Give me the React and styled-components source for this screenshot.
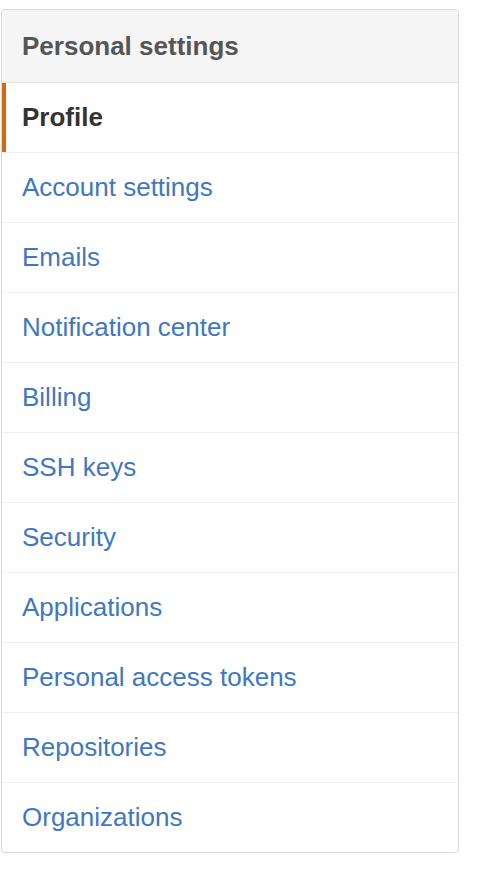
import styled, { createGlobalStyle } from 'styled-components';

const GlobalStyle = createGlobalStyle`
  body {
    margin: 0;
    background: #fff;
    font-family: 'Liberation Sans', Arial, sans-serif;
  }
`;

const Page = styled.div`
  padding: 9px 19px 20px 1px;
`;

const Menu = styled.nav`
  border: 1px solid #d8d8d8;
  border-radius: 4px;
  background: #fff;
  overflow: hidden;
`;

const MenuHeading = styled.h3`
  margin: 0;
  height: 72px;
  display: flex;
  align-items: center;
  padding: 0 20px;
  font-size: 26px;
  font-weight: bold;
  color: #555;
  background: #f5f5f5;
  border-bottom: 1px solid #e5e5e5;
`;

const MenuItem = styled.a`
  display: flex;
  align-items: center;
  height: 69px;
  padding: 0 20px;
  font-size: 26px;
  text-decoration: none;
  color: ${(props) => (props.$selected ? '#333' : '#4078c0')};
  font-weight: ${(props) => (props.$selected ? 'bold' : 'normal')};
  box-shadow: ${(props) => (props.$selected ? 'inset 4px 0 0 #d26911' : 'none')};
  border-bottom: 1px solid #eee;

  &:last-child {
    border-bottom: none;
  }
`;

const items = [
  'Profile',
  'Account settings',
  'Emails',
  'Notification center',
  'Billing',
  'SSH keys',
  'Security',
  'Applications',
  'Personal access tokens',
  'Repositories',
  'Organizations',
];

const App = () => {
  return (
    <>
      <GlobalStyle />
      <Page>
        <Menu>
          <MenuHeading>Personal settings</MenuHeading>
          {items.map((item, i) => (
            <MenuItem key={item} href="#" $selected={i === 0}>
              {item}
            </MenuItem>
          ))}
        </Menu>
      </Page>
    </>
  );
};

export default App;
